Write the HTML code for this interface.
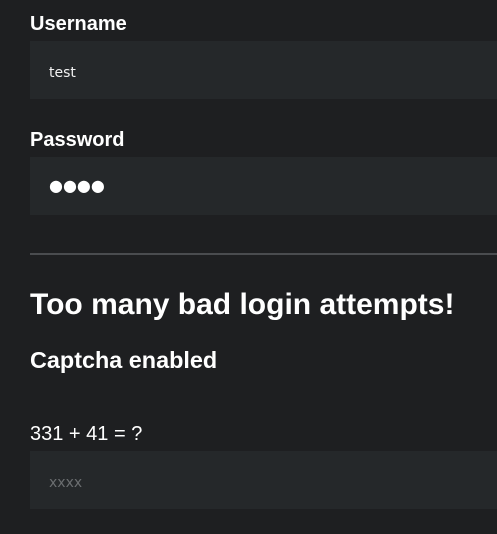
<html><head><style>
body{margin:0;background:#1e1f21;font-family:"Liberation Sans",sans-serif;color:#fff;width:497px;height:534px;overflow:hidden;position:relative}
.a{position:absolute;left:30px;white-space:nowrap}
.lbl{font-weight:bold;font-size:20px}
.in{position:absolute;left:30px;width:480px;height:58px;background:#25282a}
.t{position:absolute;left:19px;top:3px;line-height:58px;font-family:"DejaVu Sans",sans-serif;font-size:14px;color:#f2f2f2}
</style></head><body>
<div class="a lbl" style="top:13px">Username</div>
<div class="in" style="top:41px"><span class="t">test</span></div>
<div class="a lbl" style="top:129px">Password</div>
<div class="in" style="top:157px"><span class="t" style="font-size:16px;top:0px;color:#fff">●●●●</span></div>
<div style="position:absolute;left:30px;top:253px;width:470px;height:2px;background:#4a4c4f"></div>
<div class="a" style="top:288px;font-size:30px;font-weight:bold">Too many bad login attempts!</div>
<div class="a" style="top:347px;font-size:23.4px;font-weight:bold">Captcha enabled</div>
<div class="a" style="top:423px;font-size:20px">331 + 41 = ?</div>
<div class="in" style="top:451px"><span class="t" style="color:#6b6e70">xxxx</span></div>
</body></html>
